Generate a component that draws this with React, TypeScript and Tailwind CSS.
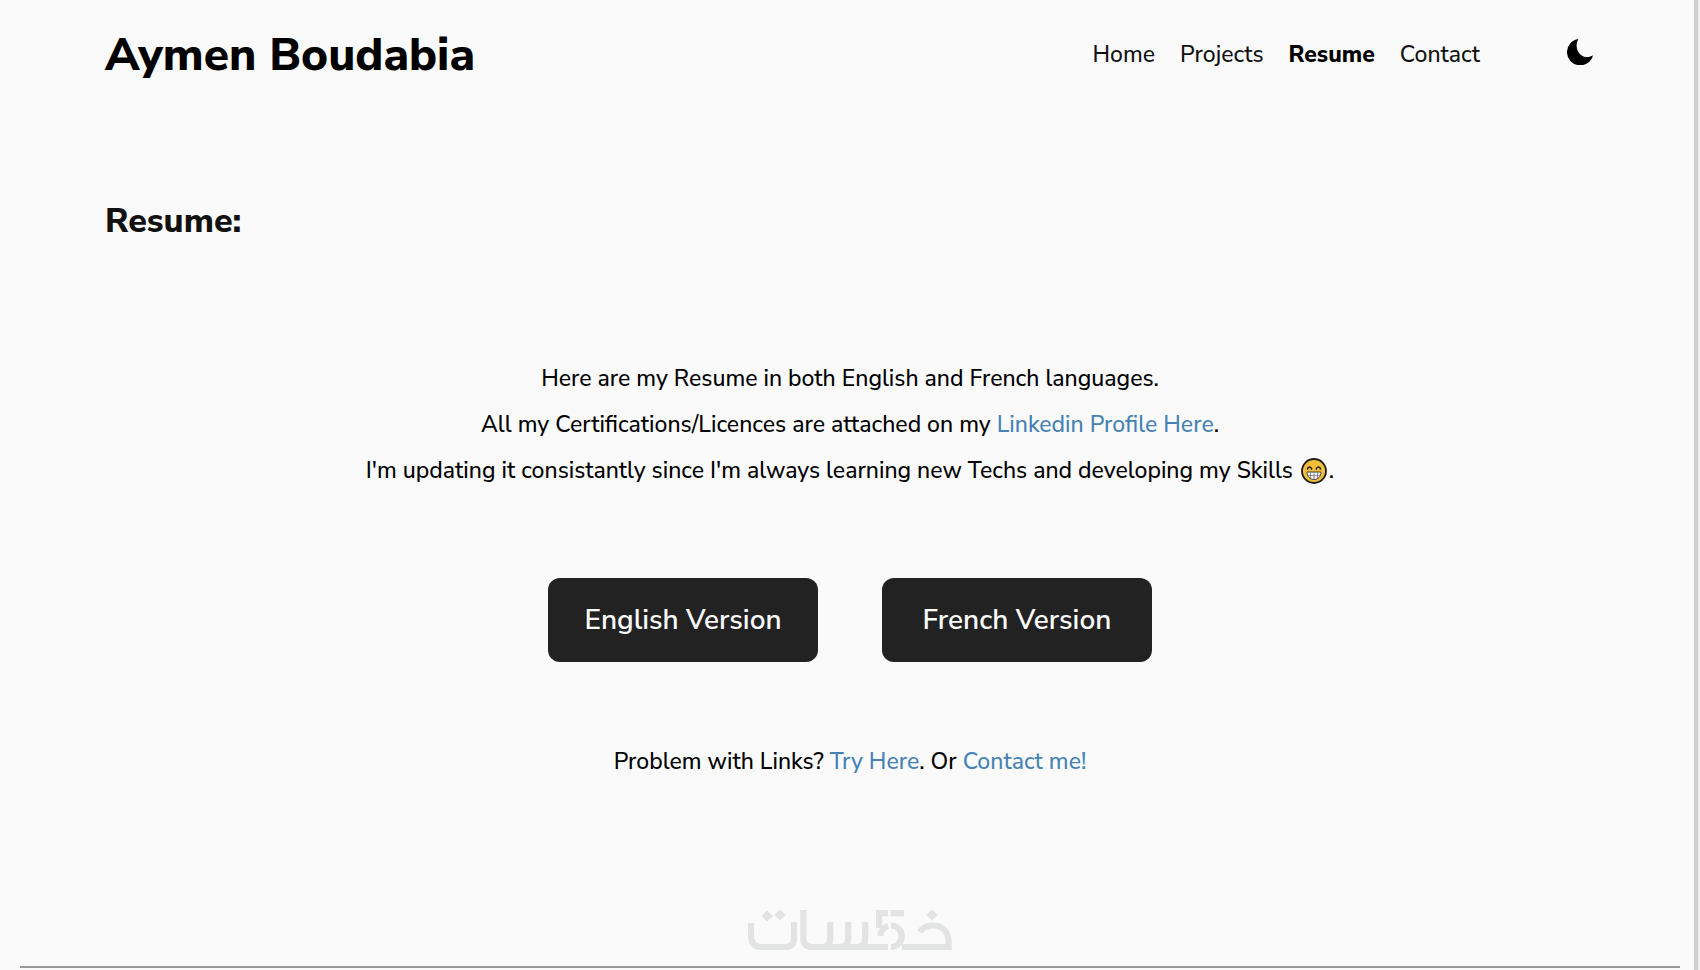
const navItems = [
  { label: 'Home', href: '#home' },
  { label: 'Projects', href: '#projects' },
  { label: 'Resume', href: '#resume', active: true },
  { label: 'Contact', href: '#contact' },
];

const versions = ['English Version', 'French Version'];

function MoonIcon() {
  return (
    <svg viewBox="0 0 26 26" className="size-[26px]" aria-hidden="true">
      <path d="M11.4 0A13.2 13.2 0 1 0 26 16.2C22 19 16.500 18.400 13.300 15.400C9.200 11.500 8.400 5 11.400 0Z" fill="#000" />
    </svg>
  );
}

function GrinEmoji() {
  return (
    <svg viewBox="0 0 26 26" className="mr-[2px] ml-[2px] inline-block size-[26px] align-[-6px]" role="img" aria-label="grinning face">
      <circle cx="13" cy="13" r="12" fill="#f2be3a" stroke="#1c1c1c" strokeWidth="1.8" />
      <path d="M6.500 11C7 8.400 10 8.400 10.700 11M15.300 11C16 8.400 19 8.400 19.500 11" fill="none" stroke="#1c1c1c" strokeWidth="1.500" strokeLinecap="round" />
      <path d="M6 14H20C20 18.600 17 21.500 13 21.500S6 18.600 6 14Z" fill="#f3f3f3" stroke="#444" strokeWidth="1" />
      <path d="M6.500 17.600H19.500M9.500 14V20.500M13 14V21.500M16.500 14V20.500" stroke="#777" strokeWidth=".8" />
    </svg>
  );
}

function Watermark() {
  return (
    <svg viewBox="0 0 204 42" className="h-[42px] w-[204px]" role="img" aria-label="خمسات">
      <g fill="none" stroke="#e1e4e3" strokeWidth="6.200">
        <path d="M3.100 14V27Q3.100 38 13 38H37Q46 38 46 29V13" />
        <path d="M55.400 1V29Q55.400 38 64 38H140" />
        <path d="M82.200 13V29Q82.200 38 74 38M100.200 13V29Q100.200 38 92 38M117.200 13V29Q117.200 38 109 38" />
        <path d="M140 4.100H131.100V19M142.500 4.100H156" />
        <path d="M132.500 27A10.500 10.500 0 0 1 140.300 17M143 16.500A10.700 10.700 0 0 1 143 38" />
        <path d="M154 38H200.600V34C200.600 22 194 16.500 185 16.500Q176 16.500 171.500 23" />
      </g>
      <path d="M19.300 1.500L25 7L19.300 12.500L13.600 7ZM32 0.500L37.700 6L32 11.500L26.300 6ZM184 0.500L189.700 6L184 11.500L178.300 6Z" fill="#e1e4e3" />
    </svg>
  );
}

export default function App() {
  return (
    <div className="flex min-h-screen bg-[#fafafa] font-['Nunito_Sans',Nunito,'Open_Sans',sans-serif] text-[#111]">
      <div className="flex min-w-0 flex-1 flex-col">
        <header className="flex h-[110px] items-center justify-between pr-[101px] pl-[105px]">
          <h1 className="text-[46px] leading-none font-extrabold text-black">Aymen Boudabia</h1>
          <div className="flex items-center gap-[87px]">
            <nav className="flex gap-[25px] text-[23px] leading-8">
              {navItems.map((item) => (
                <a key={item.label} href={item.href} className={item.active ? 'font-extrabold text-black' : 'font-medium'}>
                  {item.label}
                </a>
              ))}
            </nav>
            <button type="button" aria-label="Toggle dark mode" className="pb-[6px]">
              <MoonIcon />
            </button>
          </div>
        </header>

        <main className="flex flex-col">
          <h2 className="mt-[89px] pl-[105px] text-[34px] leading-[44px] font-extrabold">Resume:</h2>

          <div className="mt-[113px] pl-[6px] text-center text-[23px] leading-[46px] font-medium text-black">
            <p>Here are my Resume in both English and French languages.</p>
            <p>
              All my Certifications/Licences are attached on my{' '}
              <a href="#linkedin" className="text-[#4682b4]">Linkedin Profile Here</a>.
            </p>
            <p>
              I'm updating it consistantly since I'm always learning new Techs and developing my Skills <GrinEmoji />.
            </p>
          </div>

          <div className="mt-[84px] flex justify-center gap-16 pl-[6px]">
            {versions.map((version) => (
              <button key={version} type="button" className="h-[84px] w-[270px] rounded-xl bg-[#222] text-[28px] font-semibold text-[#fafafa]">
                {version}
              </button>
            ))}
          </div>

          <p className="mt-[77px] pl-[6px] text-center text-[23px] leading-[46px] font-medium text-black">
            Problem with Links? <a href="#try" className="text-[#4682b4]">Try Here</a>. Or{' '}
            <a href="#contact" className="text-[#4682b4]">Contact me!</a>
          </p>
        </main>

        <footer className="mt-auto flex flex-col items-center pr-[14px] pb-[2px] pl-5">
          <Watermark />
          <hr className="mt-[15px] w-full border-t-2 border-[#999]" />
        </footer>
      </div>
      <div className="w-[6px] border-r-2 border-[#eee] bg-[#cfd0d0]" />
    </div>
  );
}
